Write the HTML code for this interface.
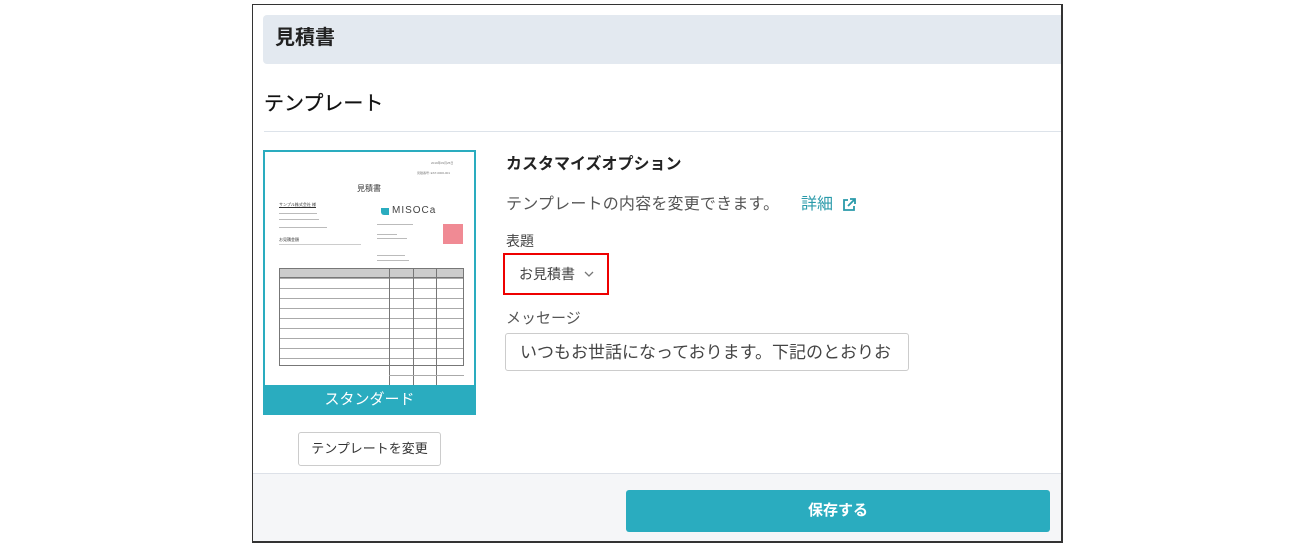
<!DOCTYPE html>
<html><head><meta charset="utf-8"><style>
*{margin:0;padding:0;box-sizing:border-box}
body{width:1316px;height:544px;background:#fff;font-family:"Liberation Sans","Noto Sans CJK JP",sans-serif;position:relative;overflow:hidden;color:#333}
.a{position:absolute}
.t{position:absolute;white-space:nowrap;line-height:1}
.ln{position:absolute;background:#999}
</style></head><body>
<div class="a" style="left:252px;top:4px;width:811px;height:539px;border:1px solid #333;border-right:2px solid #333;border-bottom:2px solid #333"></div>
<div class="a" style="left:263px;top:15px;width:798px;height:49px;background:#e3e9f0;border-radius:4px 0 0 4px"></div>
<div class="t" style="left:275px;top:28px;font-size:20px;font-weight:bold;color:#222">見積書</div>
<div class="t" style="left:264px;top:94px;font-size:20px;color:#111;-webkit-text-stroke:0.3px #111">テンプレート</div>
<div class="a" style="left:264px;top:131px;width:797px;height:1px;background:#dde3ea"></div>

<div class="a" style="left:263px;top:150px;width:213px;height:265px;border:2px solid #2aacbf;background:#fff;overflow:hidden">
 <div class="t" style="left:166px;top:10px;font-size:3px;color:#777">2019年09月25日</div>
 <div class="t" style="left:152px;top:20px;font-size:3px;color:#777">見積番号: EST-0000-001</div>
 <div class="t" style="left:92px;top:33px;font-size:8px;color:#333">見積書</div>
 <div class="t" style="left:14px;top:51px;font-size:4px;color:#333;text-decoration:underline">サンプル株式会社 様</div>
 <div class="ln" style="left:14px;top:61px;width:38px;height:1px;background:#bbb"></div>
 <div class="ln" style="left:14px;top:67px;width:40px;height:1px;background:#bbb"></div>
 <div class="ln" style="left:14px;top:75px;width:48px;height:1px;background:#bbb"></div>
 <div class="t" style="left:14px;top:86px;font-size:4px;color:#333">お見積金額</div>
 <div class="ln" style="left:14px;top:92px;width:82px;height:1px;background:#ccc"></div>
 <div class="a" style="left:116px;top:56px;width:8px;height:7px;background:#2aacbf;border-radius:0 0 0 3px"></div>
 <div class="t" style="left:127px;top:54px;font-size:10px;color:#444;letter-spacing:1px">MISOCa</div>
 <div class="ln" style="left:112px;top:72px;width:36px;height:1px;background:#bbb"></div>
 <div class="ln" style="left:112px;top:82px;width:20px;height:1px;background:#bbb"></div>
 <div class="ln" style="left:112px;top:86px;width:30px;height:1px;background:#bbb"></div>
 <div class="ln" style="left:112px;top:103px;width:28px;height:1px;background:#bbb"></div>
 <div class="ln" style="left:112px;top:108px;width:32px;height:1px;background:#bbb"></div>
 <div class="a" style="left:178px;top:72px;width:20px;height:20px;background:#f08a94"></div>
 <div class="a" style="left:14px;top:116px;width:185px;height:98px;border:1px solid #777;background:repeating-linear-gradient(#fff 0 9px,#aaa 9px 10px)"></div>
 <div class="a" style="left:14px;top:116px;width:185px;height:10px;background:#ccc;border:1px solid #777"></div>
 <div class="a" style="left:124px;top:116px;width:1px;height:120px;background:#777"></div>
 <div class="a" style="left:148px;top:116px;width:1px;height:120px;background:#777"></div>
 <div class="a" style="left:171px;top:116px;width:1px;height:120px;background:#777"></div>
 <div class="ln" style="left:124px;top:223px;width:75px;height:1px;background:#aaa"></div>
 <div class="a" style="left:0;top:233px;width:213px;height:30px;background:#2aacbf"></div>
 <div class="t" style="left:0;width:209px;text-align:center;top:240px;font-size:15px;color:#fff">スタンダード</div>
</div>
<div class="a" style="left:298px;top:432px;width:143px;height:34px;border:1px solid #ccc;border-radius:3px"></div>
<div class="t" style="left:298px;width:143px;text-align:center;top:442px;font-size:13px;color:#333">テンプレートを変更</div>

<div class="t" style="left:506px;top:157px;font-size:16px;font-weight:bold;color:#222">カスタマイズオプション</div>
<div class="t" style="left:506px;top:197px;font-size:16px;color:#555;letter-spacing:0.2px">テンプレートの内容を変更できます。</div>
<div class="t" style="left:801px;top:197px;font-size:16px;color:#2a9aaa">詳細</div>
<svg class="a" style="left:841px;top:197px" width="16" height="16" viewBox="0 0 16 16" fill="none" stroke="#2a9aaa" stroke-width="1.8"><path d="M7 3H3v10h10V9"/><path d="M9 2h5v5M14 2L7 9"/></svg>
<div class="t" style="left:506px;top:234px;font-size:14px;color:#444">表題</div>
<div class="a" style="left:503px;top:253px;width:106px;height:42px;border:2px solid #e00"></div>
<div class="t" style="left:519px;top:267px;font-size:14px;color:#444">お見積書</div>
<svg class="a" style="left:583px;top:270px" width="12" height="8" viewBox="0 0 12 8" fill="none" stroke="#777" stroke-width="1.3"><path d="M2 2l4 4 4-4"/></svg>
<div class="t" style="left:506px;top:311px;font-size:15px;color:#555">メッセージ</div>
<div class="a" style="left:505px;top:333px;width:404px;height:38px;border:1px solid #ccc;border-radius:3px;overflow:hidden">
 <div class="t" style="left:14px;top:10px;font-size:17px;color:#444">いつもお世話になっております。下記のとおりお</div>
</div>

<div class="a" style="left:253px;top:473px;width:808px;height:68px;background:#f5f6f8;border-top:1px solid #dde1e8"></div>
<div class="a" style="left:626px;top:490px;width:424px;height:42px;background:#2aacbf;border-radius:3px"></div>
<div class="t" style="left:626px;width:424px;text-align:center;top:503px;font-size:15px;font-weight:bold;color:#fff">保存する</div>
</body></html>
